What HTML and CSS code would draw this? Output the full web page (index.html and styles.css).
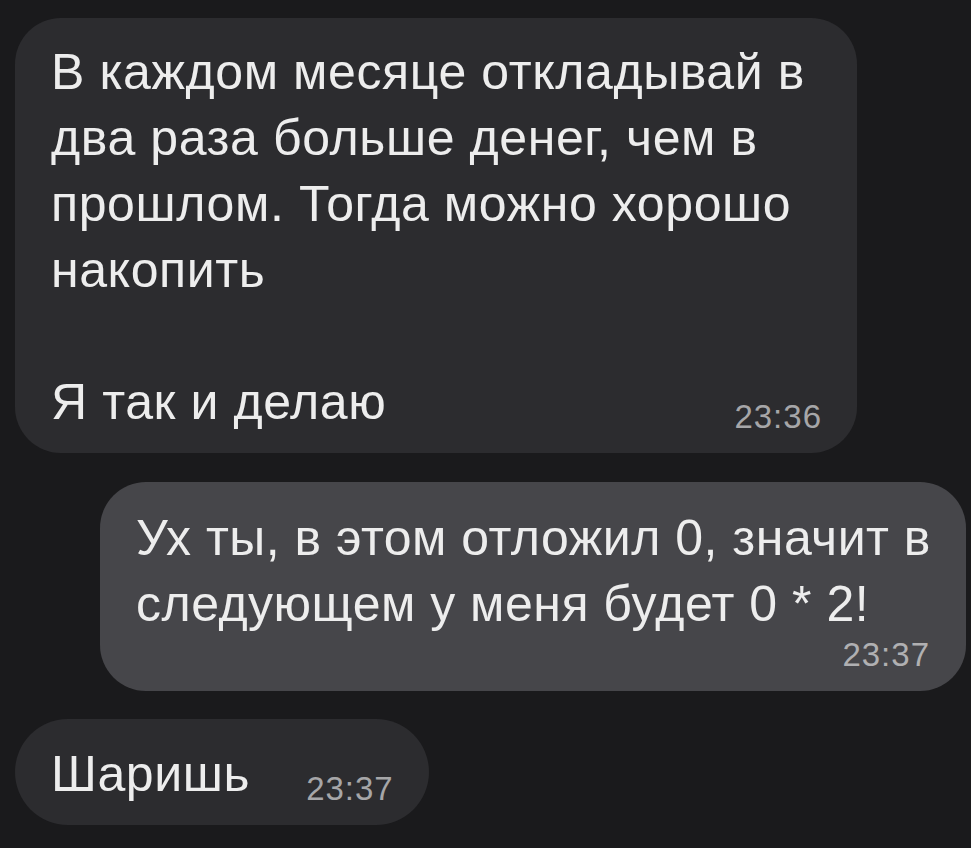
FILE: index.html
```html
<!doctype html>
<html lang="ru">
<head>
    <meta charset="UTF-8">
    <meta name="viewport" content="width=device-width, initial-scale=1.0">
    <title>Чат</title>
    <link rel="stylesheet" href="styles.css">
</head>
<body>
    <div class="chat">
        <div class="bubble in wide">
            <div class="text">В каждом месяце откладывай в<br>два раза больше денег, чем в<br>прошлом. Тогда можно хорошо<br>накопить<br><br>Я так и делаю</div>
            <span class="time">23:36</span>
        </div>

        <div class="bubble out">
            <div class="text">Ух ты, в этом отложил 0, значит в<br>следующем у меня будет 0 * 2!</div>
            <span class="time">23:37</span>
        </div>

        <div class="bubble in short">
            <div class="text">Шаришь</div>
            <span class="time">23:37</span>
        </div>
    </div>
</body>
</html>
```

FILE: styles.css
```css
html, body {
    margin: 0;
    background: #1a1a1c;
}
body {
    font-family: "Liberation Sans", Arial, sans-serif;
    color: #ededed;
}
.chat {
    display: flex;
    flex-direction: column;
    padding: 18px 5px 0 15px;
}
.bubble {
    border-radius: 46px;
    box-sizing: border-box;
}
.text {
    font-size: 50px;
    line-height: 66px;
    letter-spacing: 0.6px;
    white-space: nowrap;
}
.time {
    font-size: 33px;
    line-height: 36px;
    letter-spacing: 1px;
    color: #a6a6a8;
}
.in {
    background: #2c2c2f;
    align-self: flex-start;
}
.out {
    background: #46464a;
    align-self: flex-end;
    width: 866px;
    margin: 29px 0 28px;
    padding: 23px 36px 18px 36px;
    display: flex;
    flex-direction: column;
}
.out .text {
    letter-spacing: 0.5px;
}
.out .time {
    align-self: flex-end;
    color: #b0b0b2;
}
.wide {
    width: 842px;
    padding: 21px 35px 18px 36px;
    display: grid;
}
.wide .text,
.wide .time {
    grid-area: 1 / 1;
}
.wide .time {
    justify-self: end;
    align-self: end;
}
.short {
    display: flex;
    align-items: flex-end;
    gap: 56px;
    padding: 22px 35px 18px 36px;
    border-radius: 53px;
}
```
